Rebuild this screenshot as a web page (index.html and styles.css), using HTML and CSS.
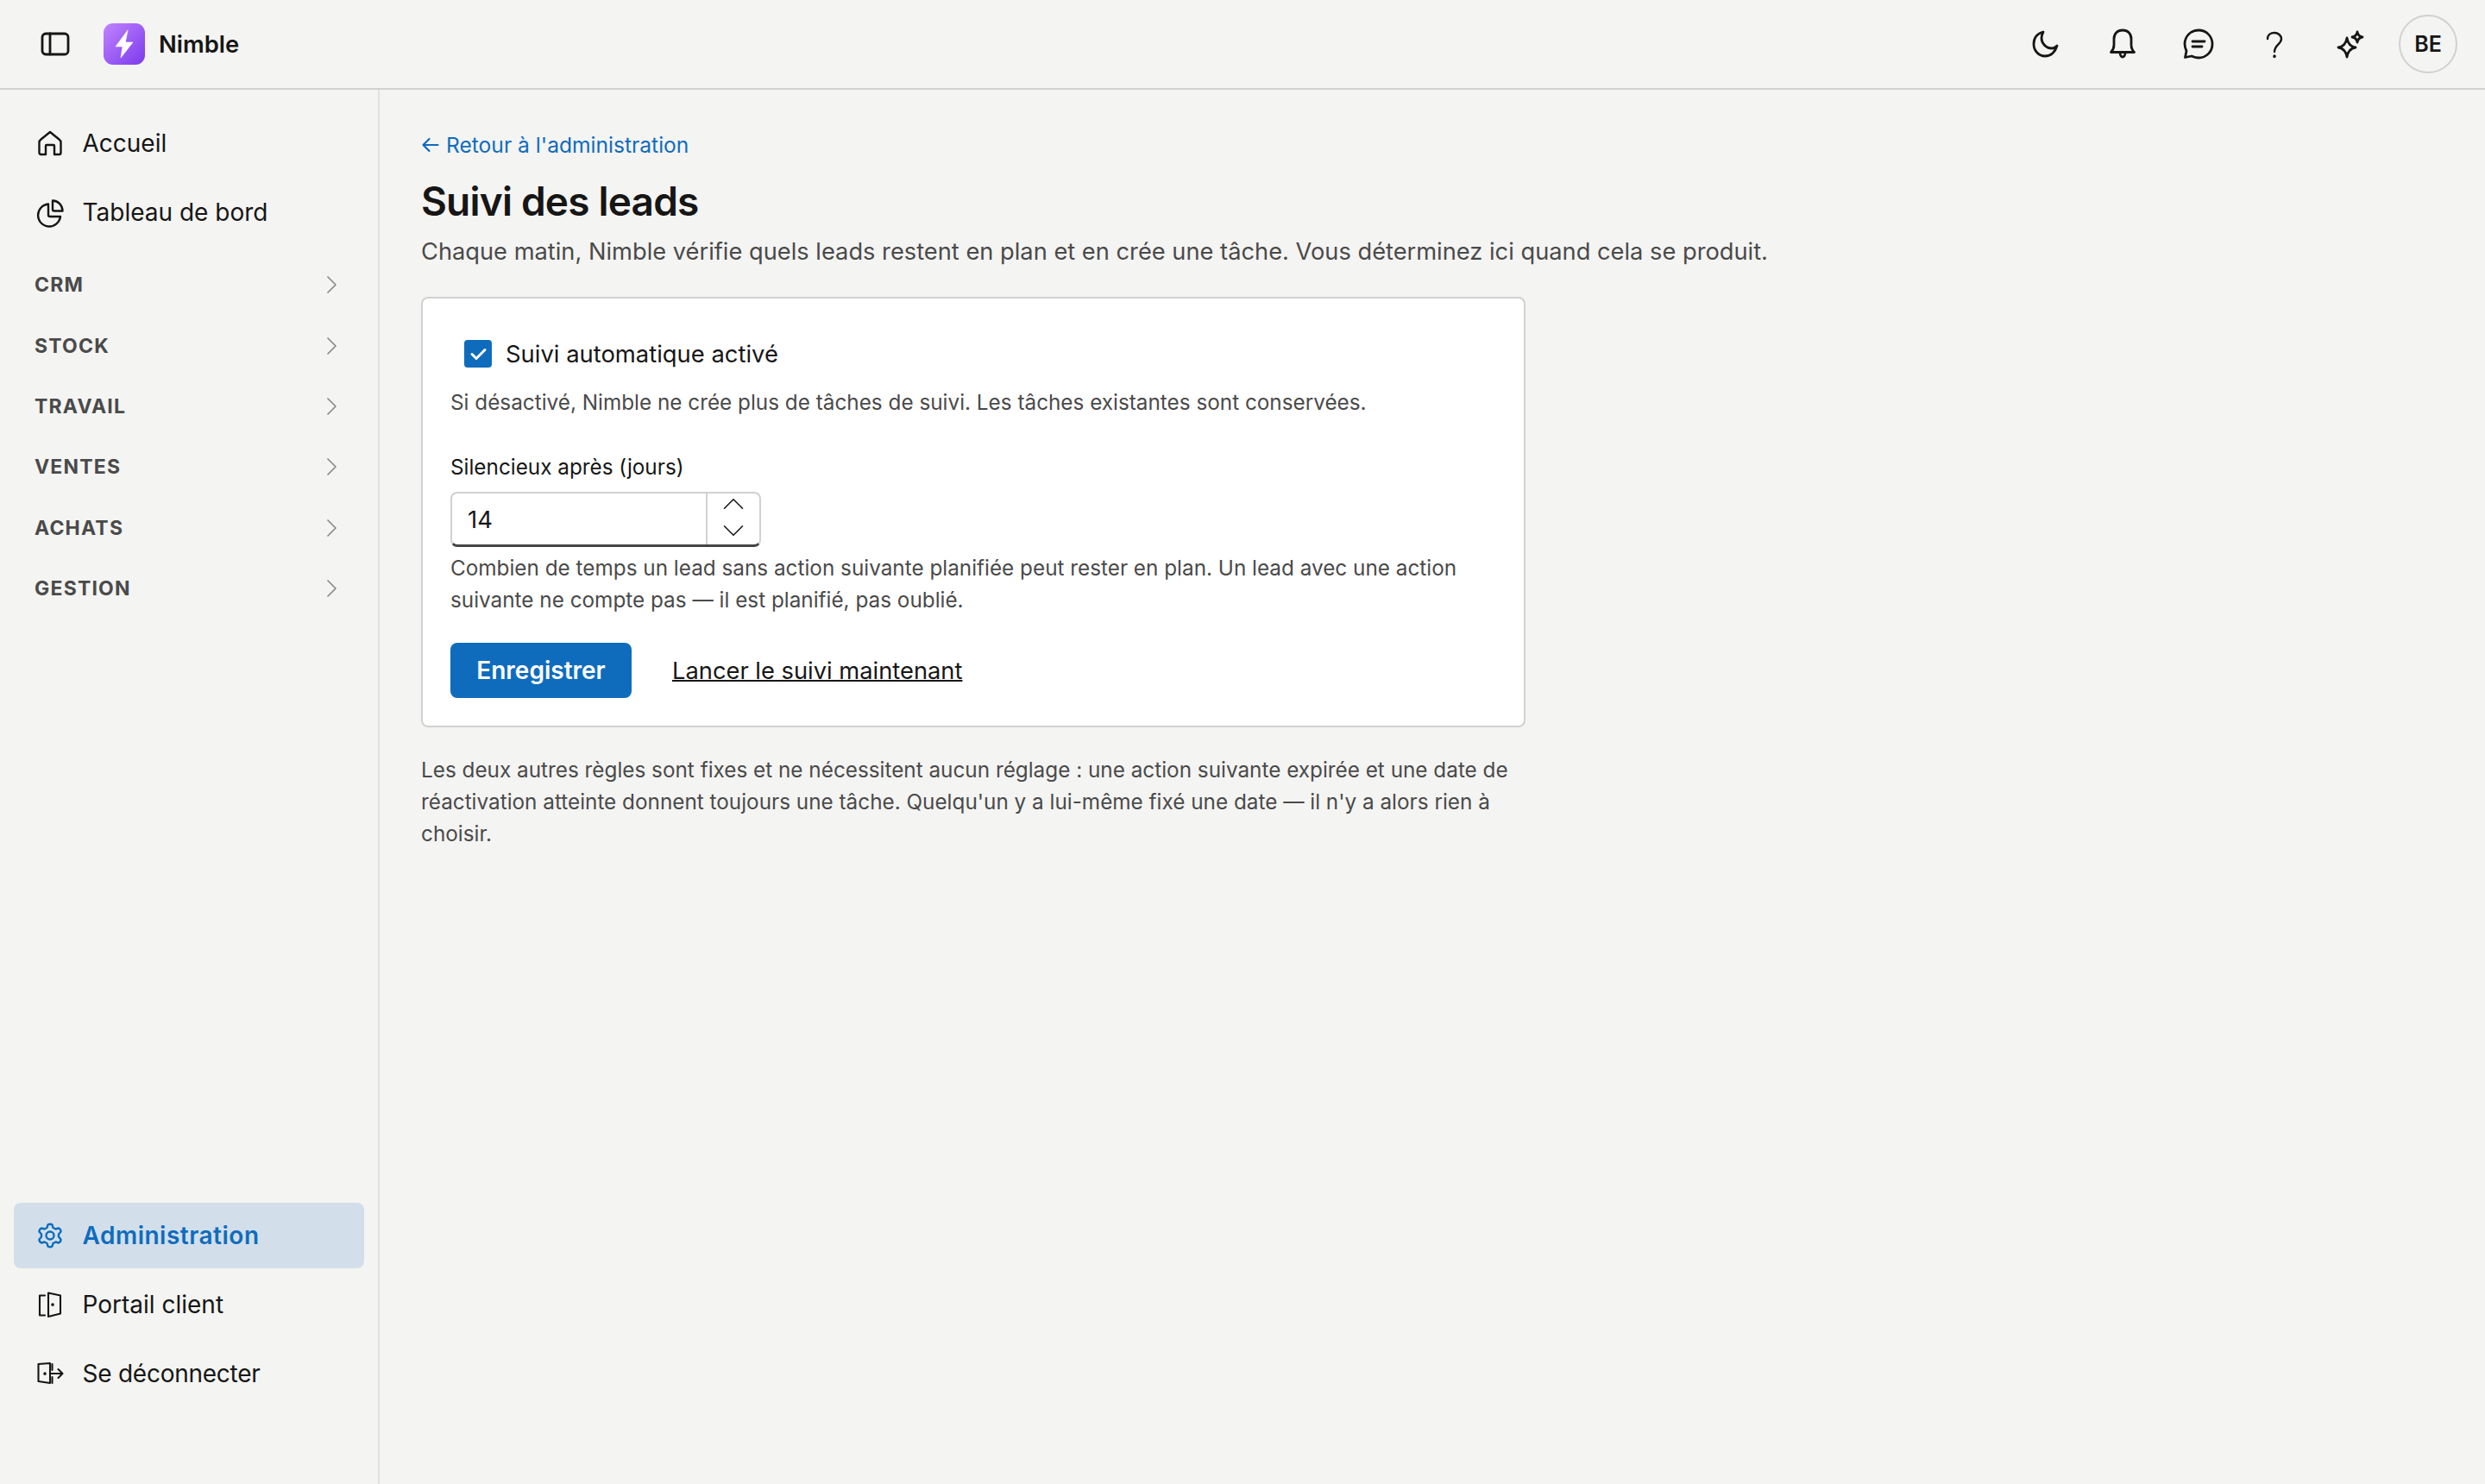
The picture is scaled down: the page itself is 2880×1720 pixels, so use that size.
FILE: index.html
```html
<!DOCTYPE html>
<html lang="fr">
<head>
<meta charset="utf-8">
<title>Suivi des leads</title>
<link rel="stylesheet" href="styles.css">
</head>
<body>
<header class="topbar">
  <div class="topbar-left">
    <button class="toggle" aria-label="Menu">
      <svg class="i36" viewBox="0 0 36 36"><rect x="3" y="6" width="30" height="24" rx="4"/><path d="M12 6v24"/></svg>
    </button>
    <span class="logo">
      <svg viewBox="0 0 48 48"><path d="M28 8 14 27h8l-2 13 14-18h-8.500z"/></svg>
    </span>
    <span class="brand">Nimble</span>
  </div>
  <div class="topbar-right">
    <span class="tool"><svg class="i36" viewBox="0 0 36 36"><path d="M14 4C7 6 3 11 3 18c0 8 6 14 13 14 7 0 12-5 14-12-2 2-4 3-6 3-7 0-12-6-12-12 0-3 1-5 2-7z"/></svg></span>
    <span class="tool"><svg class="i36" viewBox="0 0 36 36"><path d="M4.500 27.500C7 25 8 22 8 19v-7C8 6 12 2 18 2s10 4 10 10v7c0 3 1 6 3.500 8.500z"/><path d="M15 28c0 3 1.500 5 3 5s3-2 3-5"/></svg></span>
    <span class="tool"><svg class="i36" viewBox="0 0 36 36"><path d="M18 2C9 2 2 9 2 18c0 3 1 6 2 8l-1.500 7.500L10 32c2.500 1 5 2 8 2 9 0 16-7 16-16S27 2 18 2z"/><path d="M11 15h14M11 21h11"/></svg></span>
    <span class="tool"><svg class="i36 thin" viewBox="0 0 36 36"><path d="M10 12c0-5 4-7 8-7s8 3 8 7c0 6-8 7-8 15"/><path class="dot" d="M18 32v.5"/></svg></span>
    <span class="tool"><svg class="i36" viewBox="0 0 36 36"><path d="M14 11c1 6 4 10 10 11-6 1-9 5-10 11-1-6-4-10-10-11 6-1 9-5 10-11z"/><path d="M26 4c.5 3 3 5.500 6 6-3 .5-5.500 3-6 6-.5-3-3-5.500-6-6 3-.5 5.500-3 6-6z"/></svg></span>
    <span class="avatar">BE</span>
  </div>
</header>
<div class="shell">
  <aside class="sidebar">
    <nav class="nav-top">
      <a class="nav-item"><svg class="i30" viewBox="0 0 30 30"><path d="M14 2l10.500 8.500Q26.500 12 26.500 14v12q0 2-2 2H19V18q0-1-1-1h-8q-1 0-1 1v10H3.500q-2 0-2-2V14q0-2 2-3.500z"/></svg><span>Accueil</span></a>
      <a class="nav-item"><svg class="i30" viewBox="0 0 30 30"><path d="M12 5.500A13 13 0 1 0 26 20H14q-2 0-2-2z"/><path d="M17 1.500A12 12 0 0 1 28.500 13.500H19q-2 0-2-2z"/></svg><span>Tableau de bord</span></a>
      <div class="groups">
        <a class="group"><span>CRM</span><svg class="chev" viewBox="0 0 11 20"><path d="M1 1l9 9-9 9"/></svg></a>
        <a class="group"><span>STOCK</span><svg class="chev" viewBox="0 0 11 20"><path d="M1 1l9 9-9 9"/></svg></a>
        <a class="group"><span>TRAVAIL</span><svg class="chev" viewBox="0 0 11 20"><path d="M1 1l9 9-9 9"/></svg></a>
        <a class="group"><span>VENTES</span><svg class="chev" viewBox="0 0 11 20"><path d="M1 1l9 9-9 9"/></svg></a>
        <a class="group"><span>ACHATS</span><svg class="chev" viewBox="0 0 11 20"><path d="M1 1l9 9-9 9"/></svg></a>
        <a class="group"><span>GESTION</span><svg class="chev" viewBox="0 0 11 20"><path d="M1 1l9 9-9 9"/></svg></a>
      </div>
    </nav>
    <nav class="nav-bottom">
      <a class="nav-item active"><svg class="i30" viewBox="1 0 30 30"><path d="M12.500 2.500q2.500-1.500 5 0l1 3.500 3 1.500 3.500-1q2.500 1 2.500 4l-2.500 3v3l2.500 3q0 3-2.500 4l-3.500-1-3 1.500-1 3.500q-2.500 1.500-5 0l-1-3.500-3-1.500-3.500 1q-2.500-1-2.500-4l2.500-3v-3L2.500 10.500q0-3 2.500-4l3.500 1 3-1.500z"/><circle cx="15" cy="15" r="4.500"/></svg><span>Administration</span></a>
      <a class="nav-item"><svg class="i30 fine" viewBox="0 0 30 30"><path d="M8 4.500H2v23h6"/><path d="M12 1.500l14 3v21l-14 3.500z"/><path class="dot" d="M17 15v.2"/></svg><span>Portail client</span></a>
      <a class="nav-item tight"><svg class="i30 fine" viewBox="0 0 30 30"><path d="M.5 4L14 3v23L.5 24z"/><path d="M16.500 4v7M16.500 19v7M14 15h14.500M23.500 10l5 5-5 5"/><path class="dot" d="M8 15v.2"/></svg><span>Se déconnecter</span></a>
    </nav>
  </aside>
  <main class="content">
    <a class="back"><svg viewBox="0 0 20 20"><path d="M19.500 10h-17M9.500 3l-7 7 7 7"/></svg>Retour à l'administration</a>
    <h1>Suivi des leads</h1>
    <p class="lead">Chaque matin, Nimble vérifie quels leads restent en plan et en crée une tâche. Vous déterminez ici quand cela se produit.</p>
    <section class="card">
      <label class="check">
        <span class="box"><svg viewBox="0 0 32 32"><path d="M9 16.500l5 5 10-10"/></svg></span>
        <span>Suivi automatique activé</span>
      </label>
      <p class="hint hint-check">Si désactivé, Nimble ne crée plus de tâches de suivi. Les tâches existantes sont conservées.</p>
      <div class="field-label">Silencieux après (jours)</div>
      <div class="number">
        <span class="value">14</span>
        <span class="spin">
          <svg viewBox="0 0 28 16"><path d="M2 14 14 2l12 12"/></svg>
          <svg viewBox="0 0 28 16"><path d="M2 2l12 12L26 2"/></svg>
        </span>
      </div>
      <p class="hint hint-field">Combien de temps un lead sans action suivante planifiée peut rester en plan. Un lead avec une action suivante ne compte pas — il est planifié, pas oublié.</p>
      <div class="actions">
        <button class="primary">Enregistrer</button>
        <a class="run">Lancer le suivi maintenant</a>
      </div>
    </section>
    <p class="note">Les deux autres règles sont fixes et ne nécessitent aucun réglage : une action suivante expirée et une date de réactivation atteinte donnent toujours une tâche. Quelqu'un y a lui-même fixé une date — il n'y a alors rien à choisir.</p>
  </main>
</div>
</body>
</html>
```
FILE: styles.css
```css
* { box-sizing: border-box; }
html, body { margin: 0; height: 100%; }
body {
  background: #f4f4f2;
  color: #161616;
  font-family: Inter, "Liberation Sans", sans-serif;
  font-size: 28px;
  height: 1720px;
  overflow: hidden;
  display: flex;
  flex-direction: column;
}
svg { fill: none; stroke: currentColor; stroke-linecap: round; stroke-linejoin: round; display: block; overflow: visible; }
.i36 { width: 36px; height: 36px; stroke-width: 2.8; }
.i36.thin { stroke-width: 2.4; }
.i30 { width: 30px; height: 30px; stroke-width: 2.4; flex: none; }
.i30.fine { stroke-width: 2.1; }
.dot { stroke-width: 3.4; }

.topbar {
  height: 104px;
  flex: none;
  border-bottom: 2px solid #d1d1d1;
  display: flex;
  align-items: center;
  justify-content: space-between;
  padding: 0 32px 0 46px;
}
.topbar-left, .topbar-right { display: flex; align-items: center; }
.toggle { background: none; border: 0; padding: 0; color: inherit; margin-right: 38px; }
.logo {
  width: 48px; height: 48px; border-radius: 11px;
  background: linear-gradient(135deg, #c084fc, #7c3aed);
  display: flex;
}
.logo svg { width: 48px; height: 48px; fill: #fff; stroke: #fff; stroke-width: .6; }
.brand { font-size: 27.4px; font-weight: 600; margin-left: 16px; }
.tool { width: 88px; display: flex; justify-content: center; }
.avatar {
  width: 68px; height: 68px; margin-left: 12px;
  border: 2px solid #d1d1d1; border-radius: 50%;
  display: flex; align-items: center; justify-content: center;
  font-size: 25px; font-weight: 600;
}

.shell { flex: 1; display: flex; min-height: 0; }
.sidebar {
  width: 440px; flex: none;
  border-right: 2px solid #dfe1e3;
  padding: 24px 16px 86px;
  display: flex; flex-direction: column; justify-content: space-between;
}
.nav-item {
  height: 76px; margin-bottom: 4px;
  display: flex; align-items: center; gap: 21.5px;
  padding: 0 28px;
  border-radius: 8px;
  font-size: 28px;
}
.nav-item.active { background: #d2dfea; color: #0f6cbd; font-weight: 600; letter-spacing: .5px; }
.nav-item.tight { letter-spacing: -.25px; }
.groups { margin-top: 11px; }
.group {
  height: 70.4px;
  display: flex; align-items: center; justify-content: space-between;
  padding: 0 32px 0 24px;
  font-size: 23px; font-weight: 700; letter-spacing: 1.2px; color: #4a4a4a;
}
.chev { width: 11px; height: 20px; stroke-width: 1.7; color: #8a8a8a; }

.content { flex: 1; padding: 46px 48px; min-width: 0; }
.back { display: flex; align-items: center; gap: 9px; font-size: 24.6px; color: #0f6cbd; line-height: 36px; }
.back svg { width: 20px; height: 20px; stroke-width: 2.2; }
h1 { font-size: 46px; font-weight: 600; margin: 15px 0 7px; line-height: 64px; letter-spacing: -.8px; }
.lead { margin: 0 0 32px; font-size: 27.25px; line-height: 40px; color: #4a4a4a; }
.card {
  width: 1280px;
  background: #fff;
  border: 2px solid #d1d1d1;
  border-radius: 8px;
  padding: 32px;
}
.check { display: flex; align-items: center; gap: 16px; padding-left: 16px; height: 64px; font-size: 27.4px; }
.box { width: 32px; height: 32px; background: #0f6cbd; border-radius: 4px; color: #fff; }
.box svg { width: 32px; height: 32px; stroke-width: 3; }
.hint { margin: 0; font-size: 24.3px; line-height: 37px; color: #4a4a4a; }
.hint-check { margin-top: 6px; }
.field-label { font-size: 24.3px; margin-top: 38px; line-height: 36px; }
.number {
  margin-top: 11px;
  width: 360px; height: 64px;
  border: 2px solid #d1d1d1; border-bottom: 3px solid #444;
  border-radius: 8px;
  display: flex; align-items: stretch; justify-content: space-between;
}
.value { padding-left: 18px; display: flex; align-items: center; font-size: 27.4px; }
.spin {
  width: 62px; border-left: 2px solid #d1d1d1; padding-bottom: 5px;
  display: flex; flex-direction: column; align-items: center; justify-content: center; gap: 17px;
}
.spin svg { width: 26px; height: 14px; stroke-width: 1.8; }
.hint-field { margin-top: 6px; }
.actions { display: flex; align-items: center; gap: 47px; margin-top: 31px; }
.primary {
  width: 210px; height: 64px;
  background: #0f6cbd; color: #fff; border: 0; border-radius: 8px;
  font: 600 28px Inter, sans-serif;
}
.run { font-size: 27.3px; text-decoration: underline; text-decoration-thickness: 2px; }
.note { width: 1280px; margin: 31px 0 0; font-size: 24.3px; line-height: 37px; color: #4a4a4a; }
```
